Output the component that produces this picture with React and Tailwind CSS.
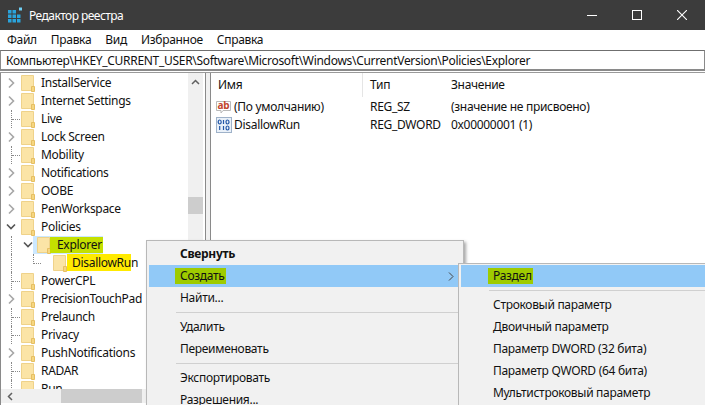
const Folder = () => (
  <svg width="14" height="17" viewBox="0 0 14 17" className="shrink-0">
    <path d="M0.5 0.5H12.5V15.5H0.5Z" fill="#fbe4a6" stroke="#efd28a" />
    <path d="M10.5 16.5V11.5H13.5V16.5Z" fill="#f6d680" stroke="#e6bf62" />
  </svg>
);

const Chevron = ({ open }) => (
  <svg width="12" height="12" viewBox="0 0 12 12" className="shrink-0">
    {open ? (
      <path d="M3 3.5L7 7.5L11 3.5" fill="none" stroke="#555" strokeWidth="1.6" />
    ) : (
      <path d="M5 1.5L9.5 6L5 10.5" fill="none" stroke="#a6a6a6" strokeWidth="1.6" />
    )}
  </svg>
);

const rowsTop = [
  ["InstallService", "c"],
  ["Internet Settings", "c"],
  ["Live", "l"],
  ["Lock Screen", "c"],
  ["Mobility", "l"],
  ["Notifications", "c"],
  ["OOBE", "c"],
  ["PenWorkspace", "c"],
  ["Policies", "o"],
];
const rowsBottom = [
  ["PowerCPL", "l"],
  ["PrecisionTouchPad", "c"],
  ["Prelaunch", "l"],
  ["Privacy", "l"],
  ["PushNotifications", "c"],
  ["RADAR", "l"],
  ["Run", "l"],
];

const Marker = ({ kind }) =>
  kind === "l" ? (
    <div className="w-[20px] h-full shrink-0 flex pl-[10px]">
      <div className="w-[9px] h-full border-l border-dotted border-[#888] flex items-center">
        <div className="w-full border-t border-dotted border-[#888]" />
      </div>
    </div>
  ) : (
    <div className="w-[20px] shrink-0 flex pl-[3px]">
      <Chevron open={kind === "o"} />
    </div>
  );

const Row = ({ name, kind }) => (
  <div className="h-[18px] flex items-center">
    <Marker kind={kind} />
    <Folder />
    <span className="ml-[6px] whitespace-nowrap">{name}</span>
  </div>
);

const Item = ({ children, bold, active, mark, arrow, sub }) => (
  <div
    className={`h-[22px] flex items-center shrink-0 ${sub ? "pl-[32px]" : "pl-[31px] mx-[2px]"} ${
      active ? "bg-[#91c9f7]" : ""
    } ${bold ? "font-bold" : ""}`}
  >
    <span className={mark ? "bg-[#9ecb00] -ml-[5px] pl-[5px] pr-[1px]" : ""}>{children}</span>
    {arrow && (
      <svg width="6" height="9" viewBox="0 0 6 9" className="ml-auto mr-[7px]">
        <path d="M1 0.5L5 4.5L1 8.5" fill="none" stroke="#444" />
      </svg>
    )}
  </div>
);

const Sep = ({ sub, h }) => (
  <div className={`${h} shrink-0 flex items-center ${sub ? "pl-[28px]" : "pl-[29px]"}`}>
    <div className="h-px w-full bg-[#d0d0d0]" />
  </div>
);

export default function App() {
  return (
    <div
      className="relative w-[705px] h-[405px] overflow-hidden bg-white text-[12px] leading-[16px] tracking-[-0.3px] text-[#111] flex flex-col"
      style={{ fontFamily: '"Noto Sans", "Open Sans", sans-serif' }}
    >
      <div className="h-[30px] shrink-0 bg-[#3c3c3c] flex items-center text-white">
        <svg width="16" height="16" viewBox="0 0 16 16" className="ml-[7px] mr-[6px]">
          <g fill="#2aa3dc">
            <rect x="1" y="3" width="3.5" height="3.5" />
            <rect x="5.5" y="3" width="3.5" height="3.5" />
            <rect x="1" y="7.5" width="3.5" height="3.5" />
            <rect x="5.5" y="7.5" width="3.5" height="3.5" />
            <rect x="10" y="7.5" width="3.5" height="3.5" />
            <rect x="1" y="12" width="3.5" height="3.5" />
            <rect x="5.5" y="12" width="3.5" height="3.5" />
            <rect x="10" y="12" width="3.5" height="3.5" />
          </g>
          <rect x="12" y="0.5" width="3" height="3" fill="#6fd0f5" />
        </svg>
        <span className="tracking-[-0.55px] pt-[1px]">Редактор реестра</span>
        <div className="ml-auto flex items-center gap-[35px] mr-[18px]">
          <svg width="10" height="10" viewBox="0 0 10 10">
            <path d="M0 5.5H10" stroke="#fff" />
          </svg>
          <svg width="10" height="10" viewBox="0 0 10 10">
            <rect x="0.5" y="0.5" width="9" height="9" fill="none" stroke="#fff" />
          </svg>
          <svg width="10" height="10" viewBox="0 0 10 10">
            <path d="M0 0L10 10M10 0L0 10" stroke="#fff" strokeWidth="1.1" />
          </svg>
        </div>
      </div>

      <div className="h-[20px] shrink-0 flex items-center pl-[7px] gap-[14px]">
        <span>Файл</span>
        <span>Правка</span>
        <span>Вид</span>
        <span>Избранное</span>
        <span>Справка</span>
      </div>

      <div className="h-[21px] shrink-0 border-t border-b-2 border-x border-[#8a8a8a] border-t-[#6f6f6f] flex items-center pl-[5px] pt-[1px] whitespace-nowrap">
        Компьютер\HKEY_CURRENT_USER\Software\Microsoft\Windows\CurrentVersion\Policies\Explorer
      </div>

      <div className="flex-1 flex min-h-0 mt-px border-t border-[#9a9a9a]">
        <div className="w-[205px] shrink-0 border-l border-[#8a8a8a] relative overflow-hidden">
          <div className="flex h-full">
            <div className="w-[187px] shrink-0 pt-px overflow-hidden">
              {rowsTop.map(([n, k]) => (
                <Row key={n} name={n} kind={k} />
              ))}
              <div className="h-[18px] flex items-center">
                <div className="w-[20px] shrink-0 h-full pl-[10px]">
                  <div className="h-full border-l border-dotted border-[#888]" />
                </div>
                <div className="w-[12px] shrink-0 flex">
                  <Chevron open />
                </div>
                <div className="w-[70px] shrink-0 h-[18px] bg-[#cce8ff] flex items-center pl-[4px]">
                  <Folder />
                  <span className="-ml-[1px] pl-[7px] bg-[#c5e000] pr-[1px] h-[16px] whitespace-nowrap">Explorer</span>
                </div>
              </div>
              <div className="h-[18px] flex items-center">
                <div className="w-[20px] shrink-0 h-full pl-[10px]">
                  <div className="h-full border-l border-dotted border-[#888]" />
                </div>
                <div className="w-[32px] shrink-0 h-full pl-[12px]">
                  <div className="w-[8px] h-[10px] border-l border-b border-dotted border-[#888]" />
                </div>
                <Folder />
                <span className="whitespace-nowrap">
                  <span className="bg-[#ffea00] pl-[5px]">DisallowRu</span>n
                </span>
              </div>
              {rowsBottom.map(([n, k]) => (
                <Row key={n} name={n} kind={k} />
              ))}
            </div>
            <div className="w-[15px] shrink-0 bg-[#f0f0f0] flex flex-col items-center pt-[6px]">
              <svg width="9" height="6" viewBox="0 0 9 6" className="shrink-0">
                <path d="M1 5L4.5 1.5L8 5" fill="none" stroke="#606060" strokeWidth="1.5" />
              </svg>
              <div className="w-full h-[17px] bg-[#cdcdcd] mt-[112px] shrink-0" />
            </div>
          </div>
          <div className="absolute left-0 right-[2px] bottom-[2px] h-[14px] bg-[#f0f0f0] flex items-center pl-[6px]">
            <svg width="6" height="9" viewBox="0 0 6 9" className="shrink-0">
              <path d="M5 1L1.5 4.5L5 8" fill="none" stroke="#606060" strokeWidth="1.5" />
            </svg>
            <div className="w-[81px] h-full bg-[#cdcdcd] ml-[48px]" />
          </div>
        </div>

        <div className="w-[6px] shrink-0 border-x border-[#8a8a8a] bg-[#f0f0f0]" />

        <div className="flex-1 min-w-0">
          <div className="h-[24px] flex items-center">
            <span className="w-[152px] pl-[7px] border-r border-[#e5e5e5] h-full flex items-center">Имя</span>
            <span className="w-[88px] pl-[7px]">Тип</span>
            <span>Значение</span>
          </div>
          <div className="h-[18px] flex items-center mt-px">
            <div className="w-[152px] flex items-center pl-[5px] gap-[2px]">
              <svg width="16" height="16" viewBox="0 0 16 16" className="shrink-0">
                <path d="M0.5 2.5H14.5V11.5H7L5 14V11.5H0.5Z" fill="#fff" stroke="#b9b9b9" />
                <text x="1.5" y="10" fontSize="10" fontWeight="700" fill="#c2452d">ab</text>
              </svg>
              <span className="whitespace-nowrap">(По умолчанию)</span>
            </div>
            <span className="w-[88px] pl-[7px]">REG_SZ</span>
            <span>(значение не присвоено)</span>
          </div>
          <div className="h-[18px] flex items-center">
            <div className="w-[152px] flex items-center pl-[5px] gap-[2px]">
              <svg width="16" height="16" viewBox="0 0 16 16" className="shrink-0">
                <rect x="0.5" y="0.5" width="15" height="15" fill="#eaf1f9" stroke="#9fb2c9" />
                <g fill="none" stroke="#2458a8" strokeWidth="1.2">
                  <ellipse cx="3.7" cy="5" rx="1.5" ry="2" />
                  <path d="M7.5 3V7" />
                  <ellipse cx="11.5" cy="5" rx="1.5" ry="2" />
                  <path d="M3.7 9V13" />
                  <path d="M7.5 9V13" />
                  <ellipse cx="11.5" cy="11" rx="1.5" ry="2" />
                </g>
              </svg>
              <span className="whitespace-nowrap">DisallowRun</span>
            </div>
            <span className="w-[88px] pl-[7px]">REG_DWORD</span>
            <span>0x00000001 (1)</span>
          </div>
        </div>
      </div>

      <div className="absolute left-[146px] top-[240px] w-[318px] h-[175px] bg-[#f1f1f1] border border-[#b8b8b8] shadow-[2px_2px_3px_rgba(0,0,0,0.35)] flex flex-col pt-[2px]">
        <Item bold>Свернуть</Item>
        <Item active mark arrow>Создать</Item>
        <Item>Найти...</Item>
        <Sep h="h-[7px]" />
        <Item>Удалить</Item>
        <Item>Переименовать</Item>
        <Sep h="h-[7px]" />
        <Item>Экспортировать</Item>
        <Item>Разрешения...</Item>
      </div>

      <div className="absolute left-[458px] top-[263px] w-[260px] h-[150px] bg-[#f1f1f1] border border-[#b8b8b8] flex flex-col pt-[1px] pl-[2px]">
        <Item sub active mark>Раздел</Item>
        <Sep sub h="h-[7px]" />
        <Item sub>Строковый параметр</Item>
        <Item sub>Двоичный параметр</Item>
        <Item sub>Параметр DWORD (32 бита)</Item>
        <Item sub>Параметр QWORD (64 бита)</Item>
        <Item sub>Мультистроковый параметр</Item>
      </div>
    </div>
  );
}
